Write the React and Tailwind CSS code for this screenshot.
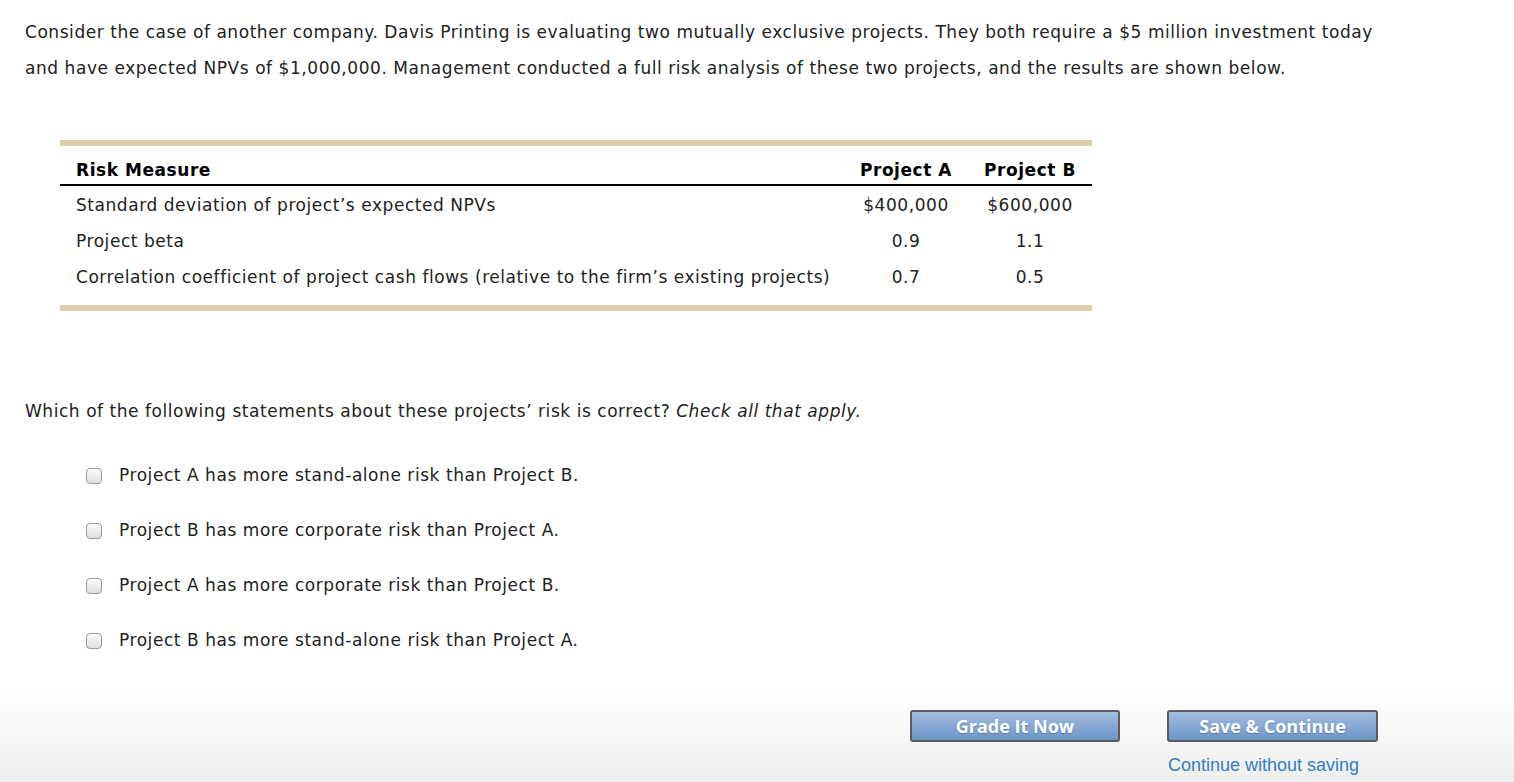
import React from "react";

const rows = [
  { label: "Standard deviation of project\u2019s expected NPVs", a: "$400,000", b: "$600,000" },
  { label: "Project beta", a: "0.9", b: "1.1" },
  {
    label: "Correlation coefficient of project cash flows (relative to the firm\u2019s existing projects)",
    a: "0.7",
    b: "0.5",
  },
];

const choices = [
  "Project A has more stand-alone risk than Project B.",
  "Project B has more corporate risk than Project A.",
  "Project A has more corporate risk than Project B.",
  "Project B has more stand-alone risk than Project A.",
];

const Checkbox = () => (
  <span className="inline-block shrink-0 w-[16px] h-[16px] rounded-[4px] border border-[#9a9a9a] bg-gradient-to-b from-[#fcfcfc] to-[#dedede] shadow-[inset_0_1px_1px_rgba(255,255,255,0.8)]" />
);

const App = () => {
  return (
    <div className="w-[1514px] h-[782px] bg-white text-[#222] overflow-hidden flex flex-col font-['DejaVu_Sans',Verdana,sans-serif] text-[17px] tracking-[0.55px]">
      <div className="px-[25px] pt-[14px]">
        <p className="leading-[36px]">
          Consider the case of another company. Davis Printing is evaluating two mutually exclusive projects. They both require a $5 million investment today
          <br />
          and have expected NPVs of $1,000,000. Management conducted a full risk analysis of these two projects, and the results are shown below.
        </p>

        {/* risk table */}
        <div className="mt-[54px] ml-[35px] w-[1032px] border-t-[6px] border-b-[6px] border-[#d9d0aa] pb-[9px]">
          <div className="grid grid-cols-[1fr_124px_124px] border-b-2 border-black font-bold text-black pt-[14px] pb-[4px] leading-[20px]">
            <div className="pl-[16px]">Risk Measure</div>
            <div className="text-center">Project A</div>
            <div className="text-center">Project B</div>
          </div>
          <div className="pt-[2px]">
            {rows.map((r) => (
              <div key={r.label} className="grid grid-cols-[1fr_124px_124px] h-[36px] items-center">
                <div className="pl-[16px]">{r.label}</div>
                <div className="text-center">{r.a}</div>
                <div className="text-center">{r.b}</div>
              </div>
            ))}
          </div>
        </div>

        <p className="mt-[88px] leading-[24px]">
          Which of the following statements about these projects&rsquo; risk is correct? <i>Check all that apply.</i>
        </p>

        <div className="mt-[25px] pl-[61px] flex flex-col">
          {choices.map((c) => (
            <label key={c} className="h-[55px] flex items-center gap-[17px]">
              <Checkbox />
              <span>{c}</span>
            </label>
          ))}
        </div>
      </div>

      {/* footer actions */}
      <div className="mt-auto h-[90px] bg-gradient-to-b from-white to-[#eeeeee] flex justify-end pr-[136px] pt-[18px] gap-[47px]">
        <div>
          <button className="w-[210px] h-[32px] rounded-[3px] border-2 border-[#5c5c5c] bg-gradient-to-b from-[#a3bde0] to-[#6b95c6] text-white font-bold text-[18px] tracking-normal font-['Open_Sans',sans-serif] leading-none [text-shadow:0_1px_1px_rgba(0,0,0,0.25)]">
            Grade It Now
          </button>
        </div>
        <div className="flex flex-col">
          <button className="w-[211px] h-[32px] rounded-[3px] border-2 border-[#5c5c5c] bg-gradient-to-b from-[#a3bde0] to-[#6b95c6] text-white font-bold text-[18px] tracking-normal font-['Open_Sans',sans-serif] leading-none [text-shadow:0_1px_1px_rgba(0,0,0,0.25)]">
            Save &amp; Continue
          </button>
          <a href="#" className="mt-[13px] ml-[1px] text-[#2f7fc4] text-[18px] tracking-normal font-['Liberation_Sans',Arial,sans-serif] leading-[20px]">
            Continue without saving
          </a>
        </div>
      </div>
    </div>
  );
};

export default App;
